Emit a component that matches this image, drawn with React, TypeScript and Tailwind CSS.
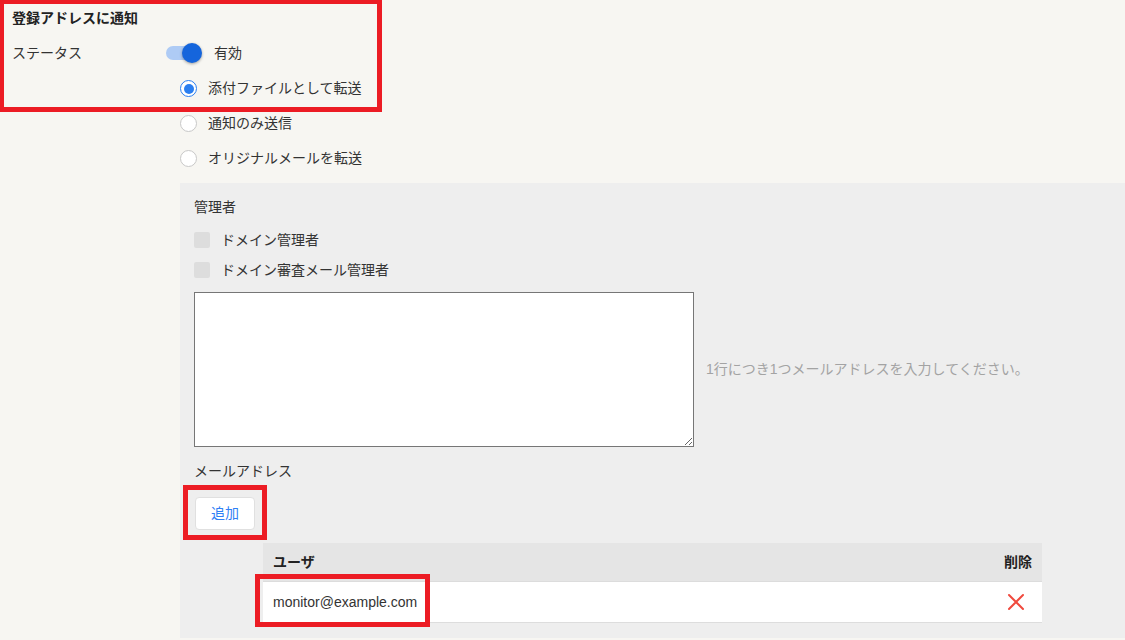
import React from "react";

const FONT = { fontFamily: '"Liberation Sans", "Noto Sans CJK JP", sans-serif' };

function Radio({ checked, label }: { checked?: boolean; label: string }) {
  return (
    <div className="flex h-[35px] items-center">
      <span
        className={
          checked
            ? "flex h-[17px] w-[17px] items-center justify-center rounded-full border-[1.5px] border-[#2a7ef0] bg-white"
            : "h-[17px] w-[17px] rounded-full border border-[#c8c8c8] bg-white"
        }
      >
        {checked && <span className="h-[10px] w-[10px] rounded-full bg-[#2a7ef0]" />}
      </span>
      <span className="ml-[11px] text-[14px] text-[#333]">{label}</span>
    </div>
  );
}

function Check({ label }: { label: string }) {
  return (
    <div className="flex h-[30px] items-center">
      <span className="h-[16px] w-[16px] rounded-[2px] bg-[#dddddd]" />
      <span className="ml-[11px] text-[14px] text-[#333]">{label}</span>
    </div>
  );
}

export default function App() {
  return (
    <div className="relative min-h-[640px] w-[1125px] overflow-hidden bg-[#f7f6f2] text-[#333]" style={FONT}>
      <div className="pl-[12px] pt-[8px]">
        <div className="h-[20px] text-[14px] font-bold leading-[20px] text-[#222]">登録アドレスに通知</div>
        <div className="mt-[10px] flex h-[30px] items-center">
          <span className="w-[154px] text-[14px]">ステータス</span>
          <span className="relative flex h-[20px] w-[36px] items-center">
            <span className="h-[14px] w-[34px] rounded-full bg-[#aecbf5]" />
            <span className="absolute left-[16px] top-0 h-[20px] w-[20px] rounded-full bg-[#1565dc] shadow-[0_1px_3px_rgba(0,0,0,0.35)]" />
          </span>
          <span className="ml-[12px] text-[14px]">有効</span>
        </div>
        <div className="ml-[168px] mt-[3px]">
          <Radio checked label="添付ファイルとして転送" />
          <Radio label="通知のみ送信" />
          <Radio label="オリジナルメールを転送" />
        </div>
      </div>

      <div className="ml-[180px] mt-[7px] bg-[#eeeeee] px-[14px] pb-[15px] pt-[14px]">
        <div className="h-[20px] text-[14px] leading-[20px]">管理者</div>
        <div className="mt-[8px]">
          <Check label="ドメイン管理者" />
          <Check label="ドメイン審査メール管理者" />
        </div>
        <div className="mt-[7px] flex items-center">
          <textarea className="h-[155px] w-[500px] resize-y border border-[#767676] bg-white" />
          <span className="ml-[12px] text-[14px] text-[#a3a3a3]">1行につき1つメールアドレスを入力してください。</span>
        </div>
        <div className="mt-[14px] h-[20px] text-[14px] leading-[20px]">メールアドレス</div>
        <button className="ml-[1px] mt-[16px] flex h-[33px] w-[60px] items-center justify-center rounded-[4px] border border-[#e0e0e0] bg-white text-[14px] text-[#2f80f5]">
          追加
        </button>
        <div className="ml-[69px] mt-[13px] w-[779px]">
          <div className="flex h-[39px] items-center justify-between border-b border-[#dcdcdc] bg-[#e5e5e5] px-[10px] text-[14px] font-bold text-[#222]">
            <span>ユーザ</span>
            <span>削除</span>
          </div>
          <div className="flex h-[41px] items-center justify-between border-b border-[#dddddd] bg-white pl-[10px] pr-[17px] text-[14px]">
            <span>monitor@example.com</span>
            <svg width="18" height="18" viewBox="0 0 18 18" fill="none" stroke="#f04a3e" strokeWidth="2" strokeLinecap="round">
              <path d="M2 2L16 16M16 2L2 16" />
            </svg>
          </div>
        </div>
      </div>

      <div className="absolute left-[-1px] top-[-1px] h-[113px] w-[383px] border-[5px] border-[#ec1c24]" />
      <div className="absolute left-[183px] top-[485px] h-[55px] w-[84px] border-[5px] border-[#ec1c24]" />
      <div className="absolute left-[255px] top-[574px] h-[53px] w-[175px] border-[5px] border-[#ec1c24]" />
    </div>
  );
}
